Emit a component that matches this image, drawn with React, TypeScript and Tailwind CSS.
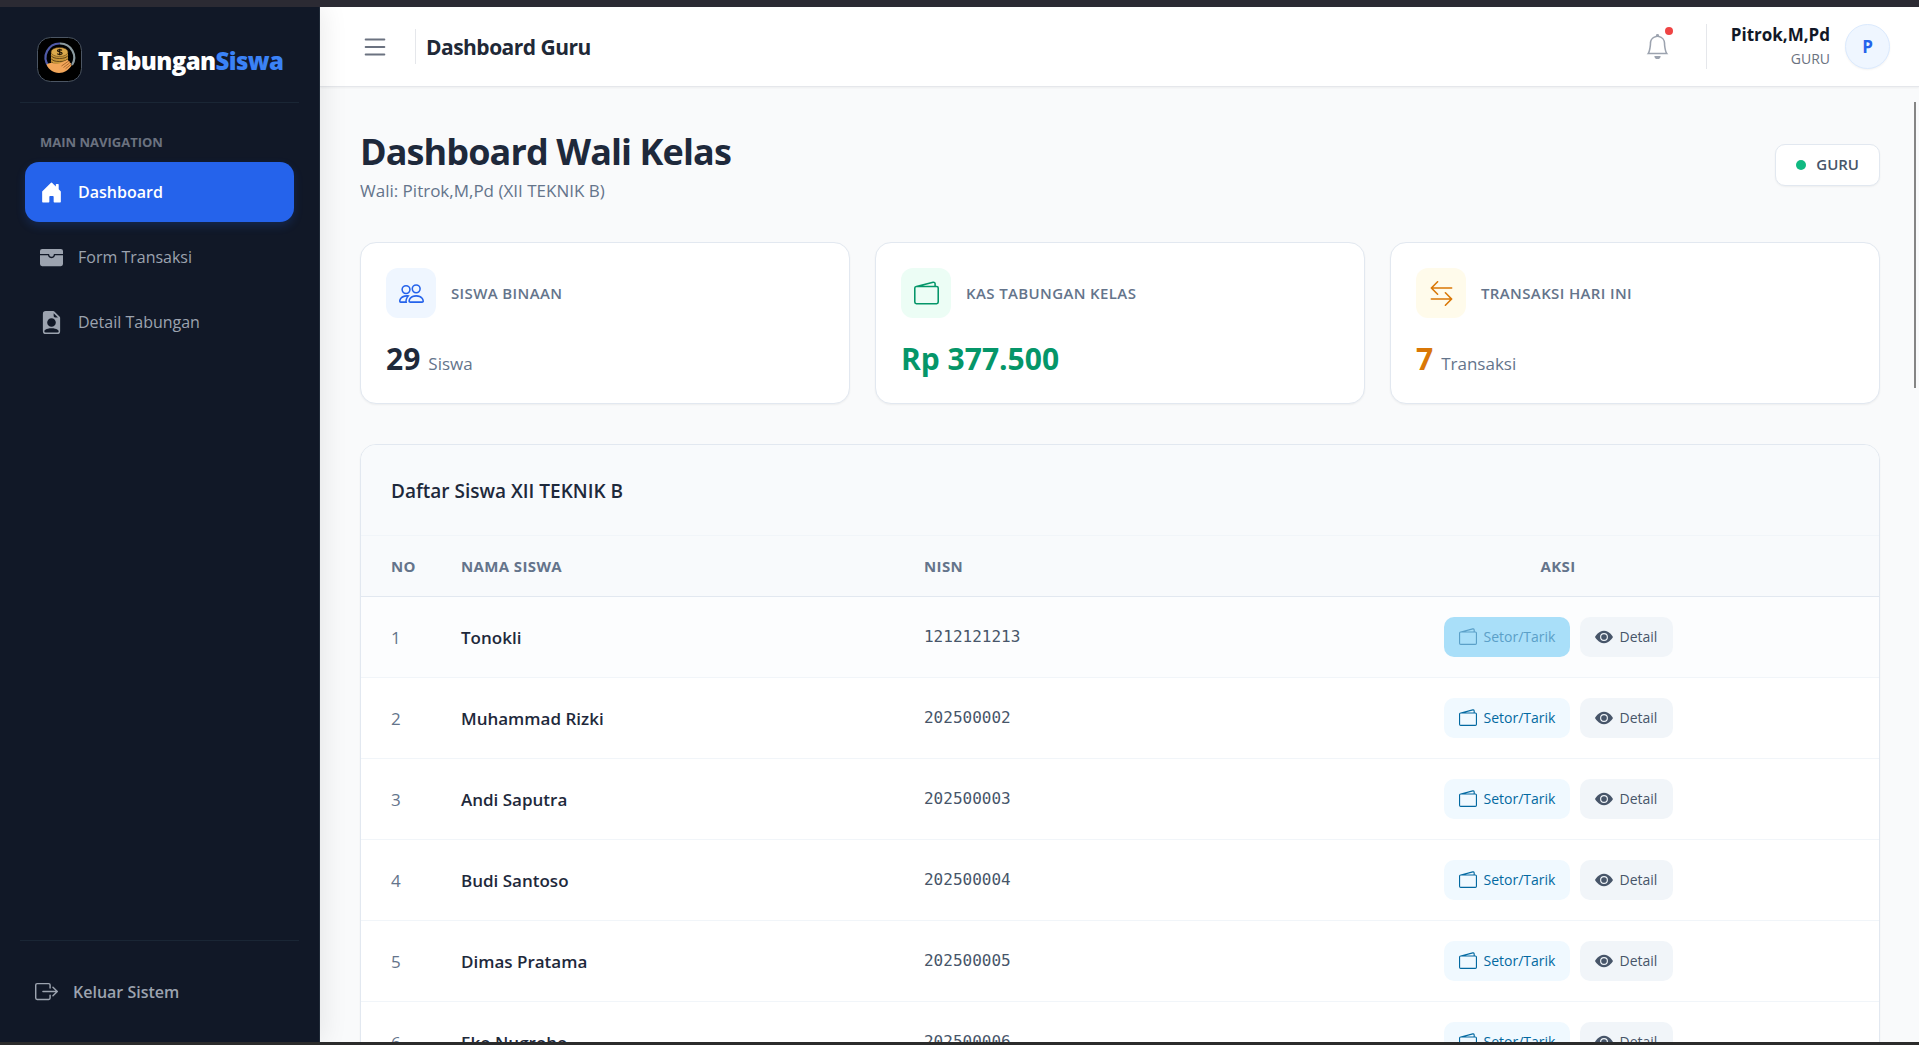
import React from "react";
import {
  BsArrowLeftRight,
  BsBell,
  BsBoxArrowRight,
  BsEyeFill,
  BsFileEarmarkPersonFill,
  BsHouseDoorFill,
  BsList,
  BsPeople,
  BsWallet2,
  BsWalletFill,
} from "react-icons/bs";

const navItems = [
  { label: "Dashboard", icon: BsHouseDoorFill, active: true },
  { label: "Form Transaksi", icon: BsWalletFill, active: false },
  { label: "Detail Tabungan", icon: BsFileEarmarkPersonFill, active: false },
];

const stats = [
  { label: "SISWA BINAAN", value: "29", unit: "Siswa", icon: BsPeople, tile: "bg-[#eff6ff] text-[#2563eb]", color: "text-[#1e293b]" },
  { label: "KAS TABUNGAN KELAS", value: "Rp 377.500", unit: "", icon: BsWallet2, tile: "bg-[#ecfdf5] text-[#059669]", color: "text-[#059669]" },
  { label: "TRANSAKSI HARI INI", value: "7", unit: "Transaksi", icon: BsArrowLeftRight, tile: "bg-[#fffbeb] text-[#d97706]", color: "text-[#d97706]" },
];

const students = [
  { name: "Tonokli", nisn: "1212121213" },
  { name: "Muhammad Rizki", nisn: "202500002" },
  { name: "Andi Saputra", nisn: "202500003" },
  { name: "Budi Santoso", nisn: "202500004" },
  { name: "Dimas Pratama", nisn: "202500005" },
  { name: "Eko Nugroho", nisn: "202500006" },
];

function Logo() {
  return (
    <svg viewBox="0 0 45 45" className="size-[45px] shrink-0" aria-hidden="true">
      <rect x="0.5" y="0.5" width="44" height="44" rx="13" fill="#000" stroke="#4b5563" />
      <path d="M11.500 29A14 14 0 0 1 23 6.500" fill="none" stroke="#4f5aa8" strokeWidth="2.200" />
      <path d="M23 6.500A14 14 0 0 1 35 28" fill="none" stroke="#8b9a9f" strokeWidth="2.200" />
      <path d="M14 15v12c0 2 4 3.500 8.500 3.500S31 29 31 27V15z" fill="#c8963a" />
      <path
        d="M14 18.500c1 2 4.200 3 8.500 3s7.500-1 8.500-3M14 21.500c1 2 4.200 3 8.500 3s7.500-1 8.500-3M14 24.500c1 2 4.200 3 8.500 3s7.500-1 8.500-3"
        fill="none"
        stroke="#4a3210"
        strokeWidth="0.800"
      />
      <ellipse cx="22.500" cy="15" rx="8.500" ry="4.500" fill="#dba94b" stroke="#4a3210" strokeWidth="0.500" />
      <path
        d="M25 13.400c-.7-.9-4.600-1.200-4.600.4 0 1.400 4.800.9 4.800 2.400 0 1.500-4 1.400-5 .4M22.700 11.800v6.400"
        fill="none"
        stroke="#1c1204"
        strokeWidth="1.100"
      />
      <path
        d="M9.500 27.500c3-1.800 6-1.800 9-1 2.500.6 4 .2 6-1l5.500-2.400c1.500-.5 2 .5 1 1.400 1.700-.7 2.500.2 1.500 1.300 1.500-.4 2 .5 1 1.600 1.200-.1 1.400.8.7 1.700-3 4-6.500 6.900-12.200 6.900-6 0-10.500-3.600-12.500-8.500z"
        fill="#f2a65a"
      />
      <path d="M24.500 29l6.500-4.500M26.500 30.500l6-4.500M28.500 31.800l5-4" stroke="#8a4d18" strokeWidth="0.700" />
    </svg>
  );
}

function Sidebar() {
  return (
    <aside className="z-10 flex w-80 shrink-0 flex-col border-r border-[#1f2937] bg-[#111827] px-5 shadow-[4px_0_24px_rgba(0,0,0,0.08)]">
      <div className="flex h-24 shrink-0 items-center gap-4 border-b border-[#1a2635] px-[17px] pb-[10px] pt-5">
        <Logo />
        <span className="pt-[2px] text-2xl font-extrabold tracking-tight text-white">
          Tabungan<span className="text-[#3b82f6]">Siswa</span>
        </span>
      </div>
      <nav className="flex grow flex-col gap-[5px] px-[5px] pt-7">
        <h2 className="mb-1 px-[15px] text-[13px]/[22px] font-bold text-[#6b7280]">MAIN NAVIGATION</h2>
        {navItems.map(({ label, icon: Icon, active }) => (
          <a
            key={label}
            href="#"
            aria-current={active ? "page" : undefined}
            className={
              active
                ? "flex h-[60px] items-center gap-[15px] rounded-[14px] bg-[#2563eb] px-[15px] text-base font-semibold text-white shadow-[0_4px_10px_rgba(37,99,235,0.2)]"
                : "flex h-[60px] items-center gap-[15px] rounded-[14px] px-[15px] text-base text-[#9ca3af]"
            }
          >
            <Icon className="size-[23px]" />
            {label}
          </a>
        ))}
      </nav>
      <div className="flex h-[102px] items-center border-t border-[#1a2635] px-[15px]">
        <button type="button" className="flex items-center gap-[15px] text-base font-semibold text-[#9ca3af]">
          <BsBoxArrowRight className="size-[23px]" />
          Keluar Sistem
        </button>
      </div>
    </aside>
  );
}

function Header() {
  return (
    <header className="flex h-20 shrink-0 items-center justify-between border-b border-[#e5e7eb] bg-white pl-10 pr-[29px] shadow-xs">
      <div className="flex items-center">
        <button type="button" aria-label="Menu" className="text-[#6b7280]">
          <BsList className="size-[30px]" />
        </button>
        <div className="ml-[25px] h-[35px] w-px bg-[#e5e7eb]" />
        <span className="ml-[10px] pt-[2px] text-[21px] font-bold tracking-tight text-[#1f2937]">Dashboard Guru</span>
      </div>
      <div className="flex items-center">
        <button type="button" aria-label="Notifikasi" className="relative text-[#9ca3af]">
          <BsBell className="size-[25px]" />
          <span className="absolute -right-[3px] -top-[7px] size-2 rounded-full bg-[#ef4444]" />
        </button>
        <div className="ml-9 h-[45px] w-px bg-[#e5e7eb]" />
        <div className="ml-6 flex flex-col items-end">
          <span className="text-[17px]/6 font-bold text-[#111827]">Pitrok,M,Pd</span>
          <span className="text-sm/6 text-[#6b7280]">GURU</span>
        </div>
        <div className="ml-[15px] flex size-[45px] items-center justify-center rounded-full border border-[#dbeafe] bg-[#eff6ff] text-[17px] font-bold text-[#2563eb] shadow-xs">
          P
        </div>
      </div>
    </header>
  );
}

function StudentTable() {
  return (
    <section className="overflow-hidden rounded-2xl border border-[#e2e8f0] bg-white shadow-xs">
      <h2 className="border-b border-[#f1f5f9] bg-[#f8fafc] px-[30px] pb-[29px] pt-[31px] text-[19px]/[30px] font-semibold text-[#1e293b]">
        Daftar Siswa XII TEKNIK B
      </h2>
      <table className="w-full table-fixed text-left">
        <colgroup>
          <col className="w-[70px]" />
          <col className="w-[30.500%]" />
          <col className="w-[22.600%]" />
          <col />
        </colgroup>
        <thead>
          <tr className="h-[60px] border-b border-[#e2e8f0] bg-[#f8fafc] text-[15px] font-bold tracking-wide text-[#64748b]">
            <th className="pl-[30px]">NO</th>
            <th className="px-[30px]">NAMA SISWA</th>
            <th className="px-[30px]">NISN</th>
            <th className="px-[30px] text-center">AKSI</th>
          </tr>
        </thead>
        <tbody>
          {students.map((s, i) => (
            <tr key={s.nisn} className="h-[81px] border-b border-[#f1f5f9] text-[17px] first:bg-[#fcfdfe]">
              <td className="pl-[30px] pt-[2px] text-[#64748b]">{i + 1}</td>
              <td className="px-[30px] pt-[2px] font-semibold text-[#1e293b]">{s.name}</td>
              <td className="px-[30px] font-['DejaVu_Sans_Mono','Liberation_Mono',monospace] text-base text-[#475569]">{s.nisn}</td>
              <td className="px-[30px]">
                <div className="flex justify-center gap-[10px] text-sm">
                  <button
                    type="button"
                    disabled={i === 0}
                    className={
                      i === 0
                        ? "flex h-10 w-[126px] items-center gap-[7px] rounded-[10px] bg-[#a9dff9] px-[15px] text-[#5ba0c8]"
                        : "flex h-10 w-[126px] items-center gap-[7px] rounded-[10px] bg-[#f0f9ff] px-[15px] text-[#0369a1]"
                    }
                  >
                    <BsWallet2 className="size-[18px] shrink-0" />
                    Setor/Tarik
                  </button>
                  <button type="button" className="flex h-10 w-[93px] items-center gap-[7px] rounded-[10px] bg-[#f1f5f9] px-[15px] text-[#475569]">
                    <BsEyeFill className="size-[18px] shrink-0" />
                    Detail
                  </button>
                </div>
              </td>
            </tr>
          ))}
        </tbody>
      </table>
    </section>
  );
}

export default function App() {
  return (
    <div className="flex h-screen flex-col overflow-hidden border-b-[3px] border-t-[7px] border-b-[#2b2b2b] border-t-[#2b2a33] bg-[#f9fafb] font-['Open_Sans','Noto_Sans',sans-serif]">
      <div className="flex min-h-0 grow">
        <Sidebar />
        <div className="relative flex min-w-0 grow flex-col">
          <Header />
          <main className="grow overflow-hidden pl-10 pr-[39px] pt-10">
            <div className="mb-10 flex items-center justify-between">
              <div>
                <h1 className="text-[36px]/[50px] font-bold tracking-tight text-[#1e293b]">Dashboard Wali Kelas</h1>
                <p className="pt-[2px] text-[17px]/[23px] text-[#64748b]">Wali: Pitrok,M,Pd (XII TEKNIK B)</p>
              </div>
              <div className="flex h-[42px] items-center gap-[10px] rounded-[10px] border border-[#e2e8f0] bg-white px-5 text-[15px] font-semibold text-[#475569] shadow-xs">
                <span className="size-[10px] rounded-full bg-[#10b981]" />
                GURU
              </div>
            </div>
            <div className="mb-10 grid grid-cols-3 gap-[25px]">
              {stats.map(({ label, value, unit, icon: Icon, tile, color }) => (
                <section key={label} className="rounded-2xl border border-[#e2e8f0] bg-white p-[25px] shadow-xs">
                  <div className="flex items-center gap-[15px]">
                    <div className={`flex size-[50px] items-center justify-center rounded-xl ${tile}`}>
                      <Icon className="size-[25px]" />
                    </div>
                    <h2 className="text-[15px] font-semibold tracking-wide text-[#64748b]">{label}</h2>
                  </div>
                  <p className="mt-[22px] flex items-baseline gap-2">
                    <span className={`text-[30px]/[38px] font-bold ${color}`}>{value}</span>
                    {unit && <span className="text-[17px]/5 text-[#64748b]">{unit}</span>}
                  </p>
                </section>
              ))}
            </div>
            <StudentTable />
          </main>
          <div className="absolute right-[3px] top-[95px] h-[286px] w-[2px] bg-[#858585]" />
        </div>
      </div>
    </div>
  );
}
